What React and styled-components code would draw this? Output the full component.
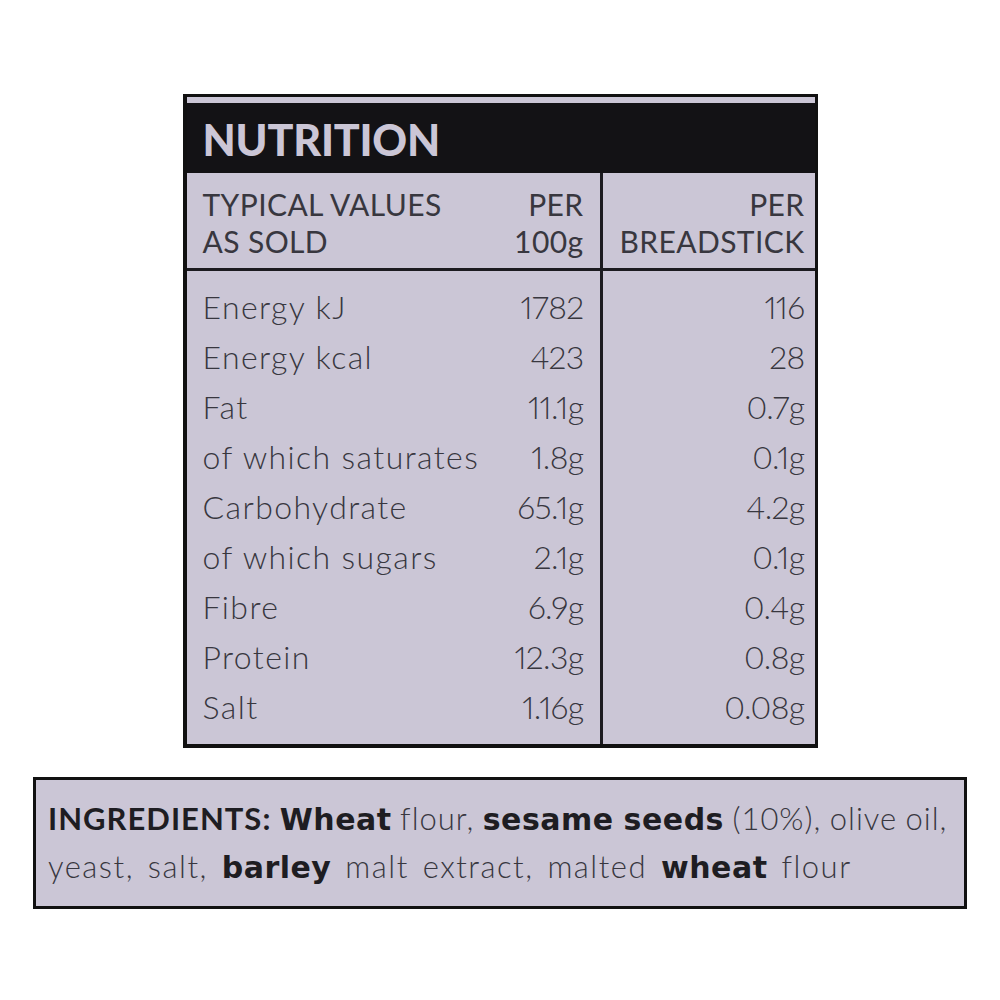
import React from 'react';
import styled, { createGlobalStyle } from 'styled-components';

const PAPER = '#cbc6d6';
const INK = '#38373f';

const rows = [
  { name: 'Energy kJ', per100: '1782', perStick: '116' },
  { name: 'Energy kcal', per100: '423', perStick: '28' },
  { name: 'Fat', per100: '11.1g', perStick: '0.7g' },
  { name: 'of which saturates', per100: '1.8g', perStick: '0.1g' },
  { name: 'Carbohydrate', per100: '65.1g', perStick: '4.2g' },
  { name: 'of which sugars', per100: '2.1g', perStick: '0.1g' },
  { name: 'Fibre', per100: '6.9g', perStick: '0.4g' },
  { name: 'Protein', per100: '12.3g', perStick: '0.8g' },
  { name: 'Salt', per100: '1.16g', perStick: '0.08g' },
];

const Global = createGlobalStyle`
  body {
    margin: 0;
    background: #ffffff;
    font-family: Lato, "Noto Sans", sans-serif;
  }
`;

export default function App() {
  return (
    <>
      <Global />
      <Page>
        <Panel>
          <TitleBand>NUTRITION</TitleBand>
          <Grid>
            <HeadCell>
              <span>TYPICAL VALUES<br />AS SOLD</span>
              <HeadRight>PER<br />100g</HeadRight>
            </HeadCell>
            <HeadCell $right>
              <HeadRight>PER<br />BREADSTICK</HeadRight>
            </HeadCell>
            <BodyCell>
              {rows.map(r => (
                <Row key={r.name}>
                  <span>{r.name}</span>
                  <Value>{r.per100}</Value>
                </Row>
              ))}
            </BodyCell>
            <BodyCell $right>
              {rows.map(r => (
                <Row key={r.name}>
                  <Value>{r.perStick}</Value>
                </Row>
              ))}
            </BodyCell>
          </Grid>
        </Panel>

        <Ingredients>
          <Line $words={-1} $letters={1}>
            <Lead>INGREDIENTS:</Lead> <Strong>Wheat</Strong> flour, <Strong>sesame seeds</Strong> (10%), olive oil,
          </Line>
          <Line $words={4} $letters={1.5}>
            yeast, salt, <Strong>barley</Strong> malt extract, malted <Strong>wheat</Strong> flour
          </Line>
        </Ingredients>
      </Page>
    </>
  );
}

const Page = styled.div`
  display: flex;
  flex-direction: column;
  align-items: center;
  gap: 29px;
  padding-top: 94px;
`;

const Panel = styled.div`
  width: 628px;
  background: ${PAPER};
  border: 3px solid #111;
  border-left-width: 4px;
  border-bottom-width: 4px;
  padding-top: 6px;
`;

const TitleBand = styled.div`
  height: 70px;
  background: #131215;
  color: ${PAPER};
  font-family: Lato, sans-serif;
  font-weight: 900;
  font-size: 43px;
  line-height: 74px;
  padding-left: 16px;
  letter-spacing: -0.2px;
`;

const Grid = styled.div`
  display: grid;
  grid-template-columns: 413px 212px;
  column-gap: 3px;
  background: #1c1b20;
`;

const HeadCell = styled.div`
  background: ${PAPER};
  height: 95px;
  margin-bottom: 3px;
  display: flex;
  justify-content: ${p => (p.$right ? 'flex-end' : 'space-between')};
  align-items: flex-start;
  padding: 13px ${p => (p.$right ? '10px' : '16px')} 0 16px;
  box-sizing: border-box;
  color: ${INK};
  font-size: 30px;
  line-height: 37px;
  letter-spacing: 0.4px;
`;

const HeadRight = styled.span`
  text-align: right;
`;

const BodyCell = styled.div`
  background: ${PAPER};
  padding: 11px ${p => (p.$right ? '10px' : '16px')} 12px 16px;
  color: ${INK};
  font-size: 32px;
  font-weight: 300;
  letter-spacing: 1.4px;
`;

const Row = styled.div`
  display: flex;
  justify-content: space-between;
  align-items: baseline;
  height: 50px;
  line-height: 50px;
`;

const Value = styled.span`
  margin-left: auto;
  text-align: right;
  letter-spacing: -0.6px;
  font-variant-numeric: proportional-nums;
`;

const Ingredients = styled.div`
  width: 916px;
  box-sizing: content-box;
  background: ${PAPER};
  border: 3px solid #111;
  padding: 15px 0 15px 12px;
  color: ${INK};
  font-size: 31px;
  font-weight: 300;
  line-height: 47px;
`;

const Line = styled.div`
  white-space: nowrap;
  word-spacing: ${p => p.$words}px;
  letter-spacing: ${p => p.$letters}px;
`;

const Lead = styled.b`
  font-weight: 700;
  color: #1e1d22;
  letter-spacing: 1px;
`;

const Strong = styled.b`
  font-family: "DejaVu Sans", sans-serif;
  font-weight: 700;
  color: #1e1d22;
  letter-spacing: 0.5px;
  font-size: 30px;
`;
